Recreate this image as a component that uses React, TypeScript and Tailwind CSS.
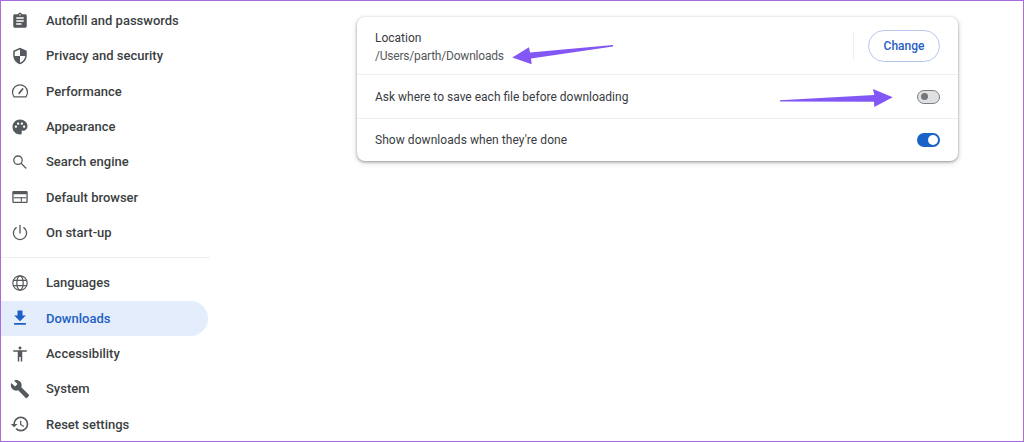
import type { ReactNode } from "react";
import {
  MdAccessibility,
  MdAssignment,
  MdBuild,
  MdFileDownload,
  MdPalette,
  MdRestore,
  MdSecurity,
} from "react-icons/md";

const iconClass = "w-[18px] h-[18px]";
const lineIcon = "w-[20px] h-[20px] fill-none stroke-current";

function SpeedIcon() {
  return (
    <svg viewBox="0 0 20 20" className={lineIcon} strokeWidth="1.2">
      <path d="M4 15.8h12a7.5 7.5 0 1 0-12 0Z" strokeLinejoin="round" />
      <path d="M9.2 12.2 12.6 8" strokeWidth="1.8" strokeLinecap="round" />
    </svg>
  );
}

function SearchIcon() {
  return (
    <svg viewBox="0 0 20 20" className={lineIcon} strokeWidth="1.3">
      <circle cx="8" cy="8.2" r="4.2" />
      <path d="M11.2 11.4 15.8 16" strokeLinecap="round" />
    </svg>
  );
}

function BrowserIcon() {
  return (
    <svg viewBox="0 0 20 20" className="w-[20px] h-[20px]" fill="currentColor">
      <path
        fillRule="evenodd"
        d="M3.5 4h13a1.2 1.2 0 0 1 1.2 1.2v9.6a1.2 1.2 0 0 1-1.2 1.2h-13a1.2 1.2 0 0 1-1.2-1.2V5.2A1.2 1.2 0 0 1 3.5 4Zm.1 3.2v7.5h12.8V7.2H3.6Z"
      />
      <rect x="3.6" y="10.2" width="12.8" height="1.1" />
      <rect x="10.8" y="10.2" width="1.1" height="4.5" />
    </svg>
  );
}

function PowerIcon() {
  return (
    <svg viewBox="0 0 20 20" className={lineIcon} strokeWidth="1.3">
      <path d="M10 2.5v7.5" strokeLinecap="round" />
      <path d="M6.2 4.6a6.6 6.6 0 1 0 7.6 0" strokeLinecap="round" />
    </svg>
  );
}

function GlobeIcon() {
  return (
    <svg viewBox="0 0 20 20" className={lineIcon} strokeWidth="1.2">
      <circle cx="10" cy="10" r="7.2" />
      <ellipse cx="10" cy="10" rx="3.2" ry="7.2" />
      <path d="M3.4 7.3h13.2M3.4 12.7h13.2" />
    </svg>
  );
}

const topItems: { label: string; icon: ReactNode }[] = [
  { label: "Autofill and passwords", icon: <MdAssignment className={iconClass} /> },
  { label: "Privacy and security", icon: <MdSecurity className={iconClass} /> },
  { label: "Performance", icon: <SpeedIcon /> },
  { label: "Appearance", icon: <MdPalette className={iconClass} /> },
  { label: "Search engine", icon: <SearchIcon /> },
  { label: "Default browser", icon: <BrowserIcon /> },
  { label: "On start-up", icon: <PowerIcon /> },
];

const bottomItems: { label: string; icon: ReactNode; active?: boolean }[] = [
  { label: "Languages", icon: <GlobeIcon /> },
  { label: "Downloads", icon: <MdFileDownload className="w-[20px] h-[20px]" />, active: true },
  { label: "Accessibility", icon: <MdAccessibility className={iconClass} /> },
  { label: "System", icon: <MdBuild className="w-[20px] h-[20px]" /> },
  { label: "Reset settings", icon: <MdRestore className="w-[20px] h-[20px]" /> },
];

function NavRow({ label, icon, active }: { label: string; icon: ReactNode; active?: boolean }) {
  return (
    <div
      className={
        active
          ? "flex items-center h-[35.35px] rounded-r-full bg-[#e3edfc] text-[#1f5fc4]"
          : "flex items-center h-[35.35px] text-[#3c3f42]"
      }
    >
      <span
        className={
          active
            ? "flex justify-center w-[37px] mr-[8px] text-[#1f5fc4]"
            : "flex justify-center w-[37px] mr-[8px] text-[#55585c]"
        }
      >
        {icon}
      </span>
      <span className="text-[13px] font-medium">{label}</span>
    </div>
  );
}

function Toggle({ on }: { on?: boolean }) {
  return on ? (
    <div className="w-[23px] h-[14px] rounded-full bg-[#1b62c8] flex items-center justify-end pr-[2px]">
      <div className="w-[10px] h-[10px] rounded-full bg-white" />
    </div>
  ) : (
    <div className="w-[23px] h-[14px] rounded-full bg-[#dfe0e1] border border-[#7b7d80] flex items-center pl-[3px]">
      <div className="w-[7px] h-[7px] rounded-full bg-[#74777a]" />
    </div>
  );
}

export default function App() {
  return (
    <div className="relative flex w-[1024px] h-[442px] overflow-hidden bg-white border border-[#ac6adc] font-['Roboto','Liberation_Sans',sans-serif]">
      <aside className="w-[207px] shrink-0 pt-[2px]">
        {topItems.map((item) => (
          <NavRow key={item.label} {...item} />
        ))}
        <div className="mt-[7px] mb-[7px] mr-[-2px] border-t border-[#eeeff0]" />
        {bottomItems.map((item) => (
          <NavRow key={item.label} {...item} />
        ))}
      </aside>

      <main className="flex-1 pl-[149px] pt-[16px]">
        <section className="w-[601px] rounded-[8px] bg-white shadow-[0_1px_3px_rgba(60,64,67,0.5),0_2px_6px_rgba(60,64,67,0.15)] text-[12px] text-[#3a3c3f]">
          <div className="flex items-center h-[58px] px-[18px] border-b border-[#eeeff0]">
            <div className="flex-1 pt-[3px]">
              <div className="leading-[17px]">Location</div>
              <div className="leading-[18px] text-[#55585c] tracking-[-0.2px]">/Users/parth/Downloads</div>
            </div>
            <div className="w-px h-[28px] bg-[#eeeff0] mr-[14px]" />
            <button className="w-[72px] h-[32px] rounded-full border border-[#b9c8ee] text-[#1f5fc4] text-[12px] font-medium">
              Change
            </button>
          </div>
          <div className="flex items-center justify-between h-[44px] px-[18px] border-b border-[#eeeff0]">
            <span>Ask where to save each file before downloading</span>
            <Toggle />
          </div>
          <div className="flex items-center justify-between h-[42px] px-[18px]">
            <span className="tracking-[0.06px]">Show downloads when they're done</span>
            <Toggle on />
          </div>
        </section>
      </main>

      <svg className="absolute left-[509px] top-[43px] w-[110px] h-[24px]" viewBox="0 0 110 24" fill="#8257f5">
        <path d="M2.3 13.5 19 3.3 20 8.5 103 1v1.5L21 14.5l.7 5.8Z" />
      </svg>
      <svg className="absolute left-[777px] top-[86px] w-[116px] h-[22px]" viewBox="0 0 116 22" fill="#8257f5">
        <path d="M2 13.2 96.3 8 95 2l19.7 8.3L96.3 20 96 14.7 2 14.5Z" />
      </svg>
    </div>
  );
}
